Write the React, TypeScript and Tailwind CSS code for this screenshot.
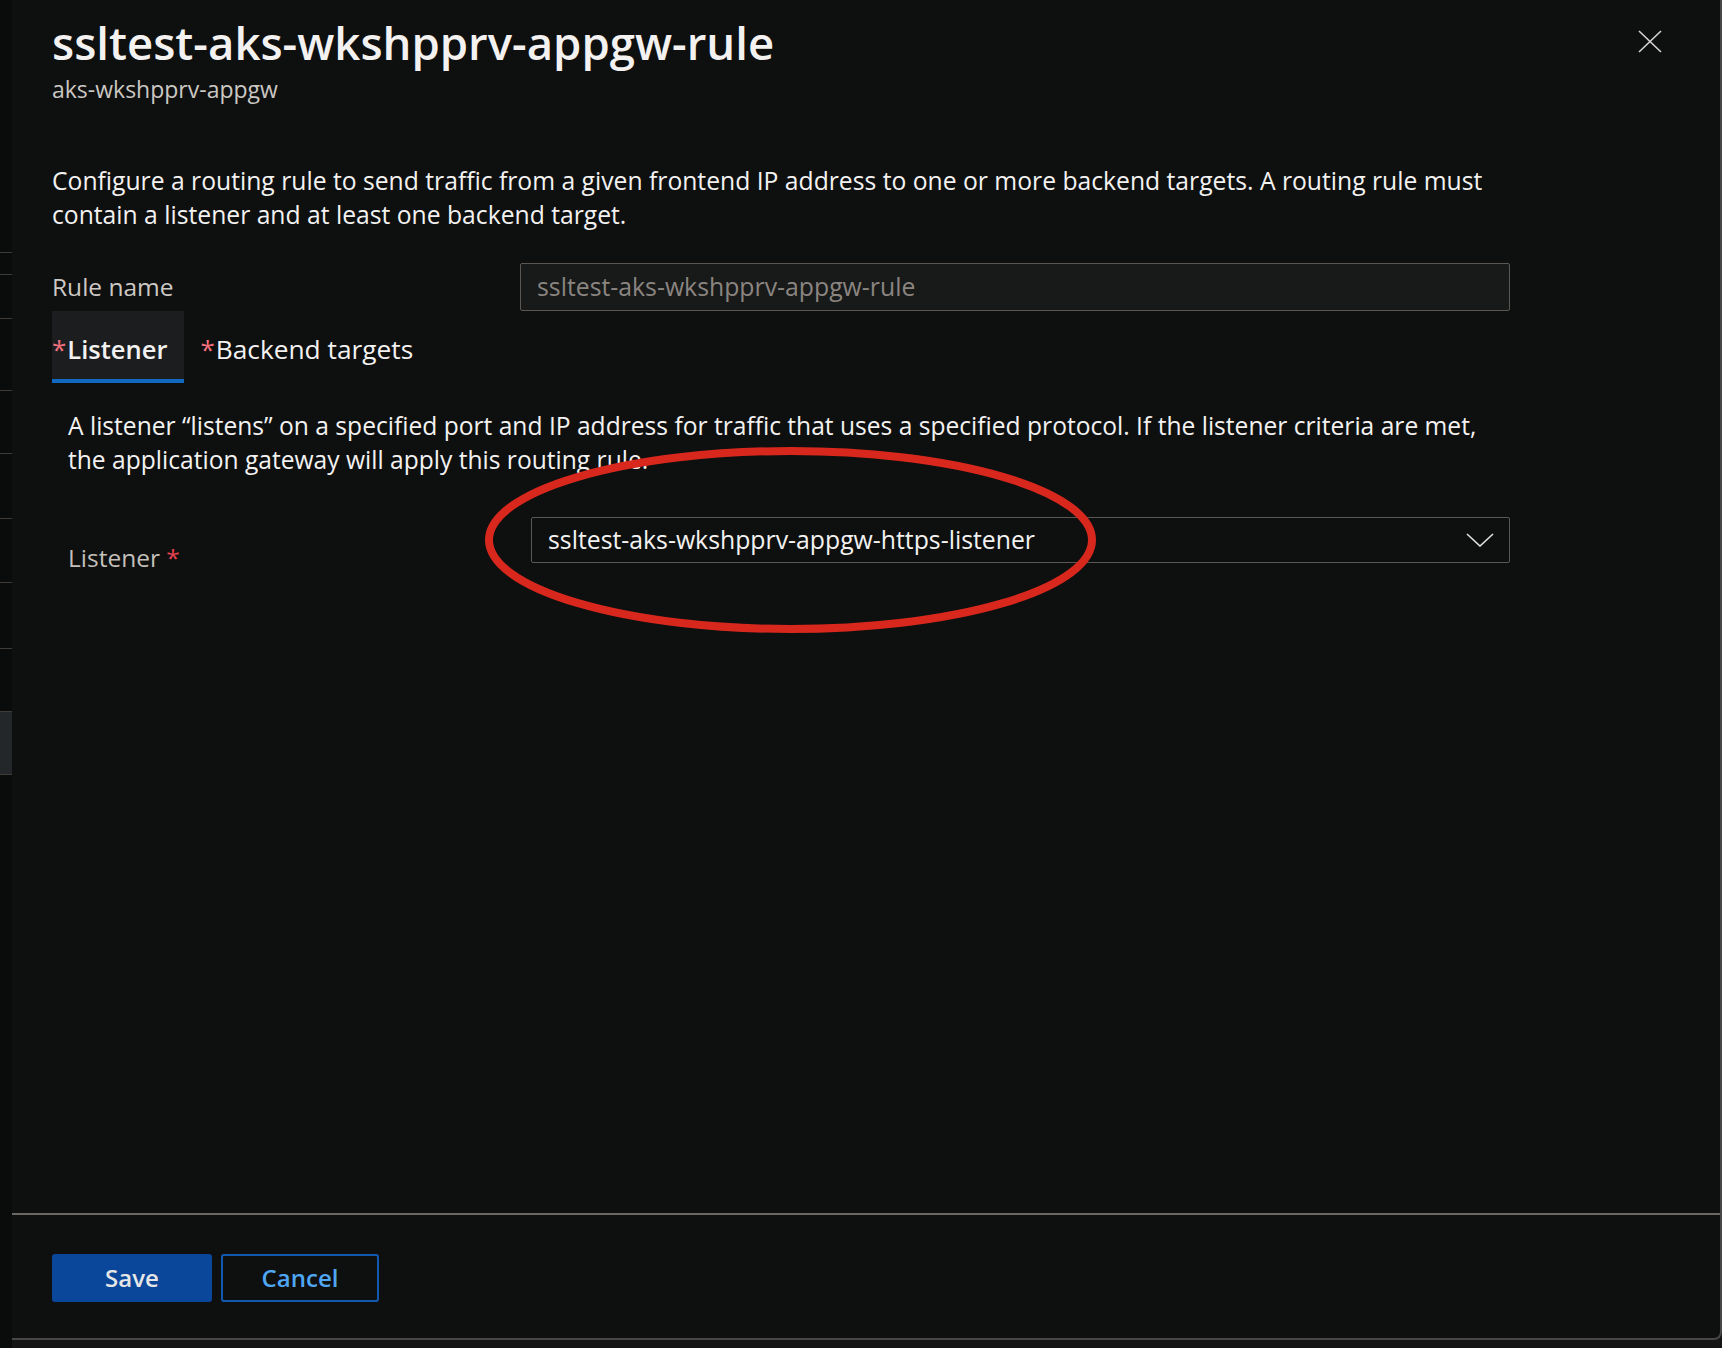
import React from "react";

function LeftStrip() {
  const line = "h-px shrink-0 bg-[#3f3c38]";
  return (
    <div className="flex w-[12px] shrink-0 flex-col bg-[#0a0b0b]">
      <div className="h-[252px] shrink-0" />
      <div className={line} />
      <div className="h-[21px] shrink-0" />
      <div className={line} />
      <div className="h-[43px] shrink-0" />
      <div className={line} />
      <div className="h-[71px] shrink-0" />
      <div className={line} />
      <div className="h-[62px] shrink-0" />
      <div className={line} />
      <div className="h-[64px] shrink-0" />
      <div className={line} />
      <div className="h-[63px] shrink-0" />
      <div className={line} />
      <div className="h-[65px] shrink-0" />
      <div className={line} />
      <div className="h-[62px] shrink-0" />
      <div className={line} />
      <div className="h-[62px] shrink-0 bg-[#24272a]" />
      <div className={line} />
    </div>
  );
}

export default function App() {
  return (
    <div className="relative flex h-[1348px] w-[1722px] overflow-hidden bg-[#151515] font-['Open_Sans',sans-serif]">
      <LeftStrip />

      <div className="flex h-[1340px] flex-1 flex-col rounded-br-[8px] border-r-2 border-b-2 border-[#474747] bg-[#0e0f0f]">
        <main className="flex-1 pl-[40px] pr-[58px]">
          {/* header */}
          <div className="flex items-start justify-between">
            <div className="pt-[16px]">
              <h1 className="text-[45.5px] leading-[52px] font-semibold whitespace-nowrap text-[#f3f2f1]">
                ssltest-aks-wkshpprv-appgw-rule
              </h1>
              <p className="mt-[6px] text-[23px] leading-[30px] text-[#cbc7c2]">
                aks-wkshpprv-appgw
              </p>
            </div>
            <button className="mt-[30px] text-[#d6d4d2]">
              <svg width="24" height="23" viewBox="0 0 24 23" fill="none">
                <path d="M1 1L23 22M23 1L1 22" stroke="currentColor" strokeWidth="1.6" />
              </svg>
            </button>
          </div>

          <p className="mt-[60px] text-[24.7px] leading-[34px] whitespace-nowrap text-[#f3f2f1]">
            Configure a routing rule to send traffic from a given frontend IP address to one or more backend targets. A routing rule must
            <br />
            contain a listener and at least one backend target.
          </p>

          {/* rule name */}
          <div className="mt-[31px] flex h-[48px] items-center">
            <label className="w-[468px] text-[24.5px] leading-[30px] text-[#cdc9c4]">Rule name</label>
            <div className="flex h-[48px] w-[990px] items-center rounded-[2px] border border-[#5b5753] bg-[#181919] px-[16px] text-[24.8px] text-[#8a8580]">
              ssltest-aks-wkshpprv-appgw-rule
            </div>
          </div>

          {/* tabs */}
          <div className="flex">
            <div className="flex h-[72px] items-baseline border-b-4 border-[#1068c0] bg-[#1c1d1f] pt-[19px] pr-[17px]">
              <span className="mr-[1px] text-[26px] text-[#f1707b]">*</span>
              <span className="text-[25.5px] font-semibold text-[#f3f2f1]">Listener</span>
            </div>
            <div className="flex h-[72px] items-baseline pt-[19px] pl-[16px]">
              <span className="mr-[1px] text-[26px] text-[#f1707b]">*</span>
              <span className="text-[26.3px] text-[#f3f2f1]">Backend targets</span>
            </div>
          </div>

          <div className="pl-[16px]">
            <p className="mt-[26px] text-[24.6px] leading-[34px] whitespace-nowrap text-[#f3f2f1]">
              A listener “listens” on a specified port and IP address for traffic that uses a specified protocol. If the listener criteria are met,
              <br />
              the application gateway will apply this routing rule.
            </p>

            <div className="mt-[40px] flex items-start">
              <label className="w-[463px] pt-[26px] text-[24.5px] leading-[30px] text-[#c3bfba]">
                Listener <span className="text-[#e8414f]">*</span>
              </label>
              <div className="flex h-[46px] w-[979px] items-center justify-between rounded-[2px] border border-[#5b5753] pr-[15px] pl-[16px] text-[24.8px] text-[#f3f2f1]">
                <span>ssltest-aks-wkshpprv-appgw-https-listener</span>
                <svg width="28" height="14" viewBox="0 0 28 14" fill="none" className="text-[#e4e2e0]">
                  <path d="M1 1L14 13L27 1" stroke="currentColor" strokeWidth="1.6" />
                </svg>
              </div>
            </div>
          </div>
        </main>

        <footer className="flex gap-[9px] border-t-2 border-[#6b6762] px-[40px] pt-[39px] pb-[36px]">
          <button className="h-[48px] w-[160px] rounded-[3px] bg-[#0a479a] text-[24px] font-semibold text-[#e6e6e6]">
            Save
          </button>
          <button className="h-[48px] w-[158px] rounded-[3px] border-2 border-[#1459b0] text-[24px] font-semibold text-[#4fa6f2]">
            Cancel
          </button>
        </footer>
      </div>

      {/* red annotation ring */}
      <svg
        className="pointer-events-none absolute top-[443px] left-[480px]"
        width="624"
        height="194"
        viewBox="0 0 624 194"
        fill="none"
      >
        <ellipse cx="310.5" cy="97" rx="301.5" ry="89" stroke="#d8281d" strokeWidth="8" />
      </svg>
    </div>
  );
}
